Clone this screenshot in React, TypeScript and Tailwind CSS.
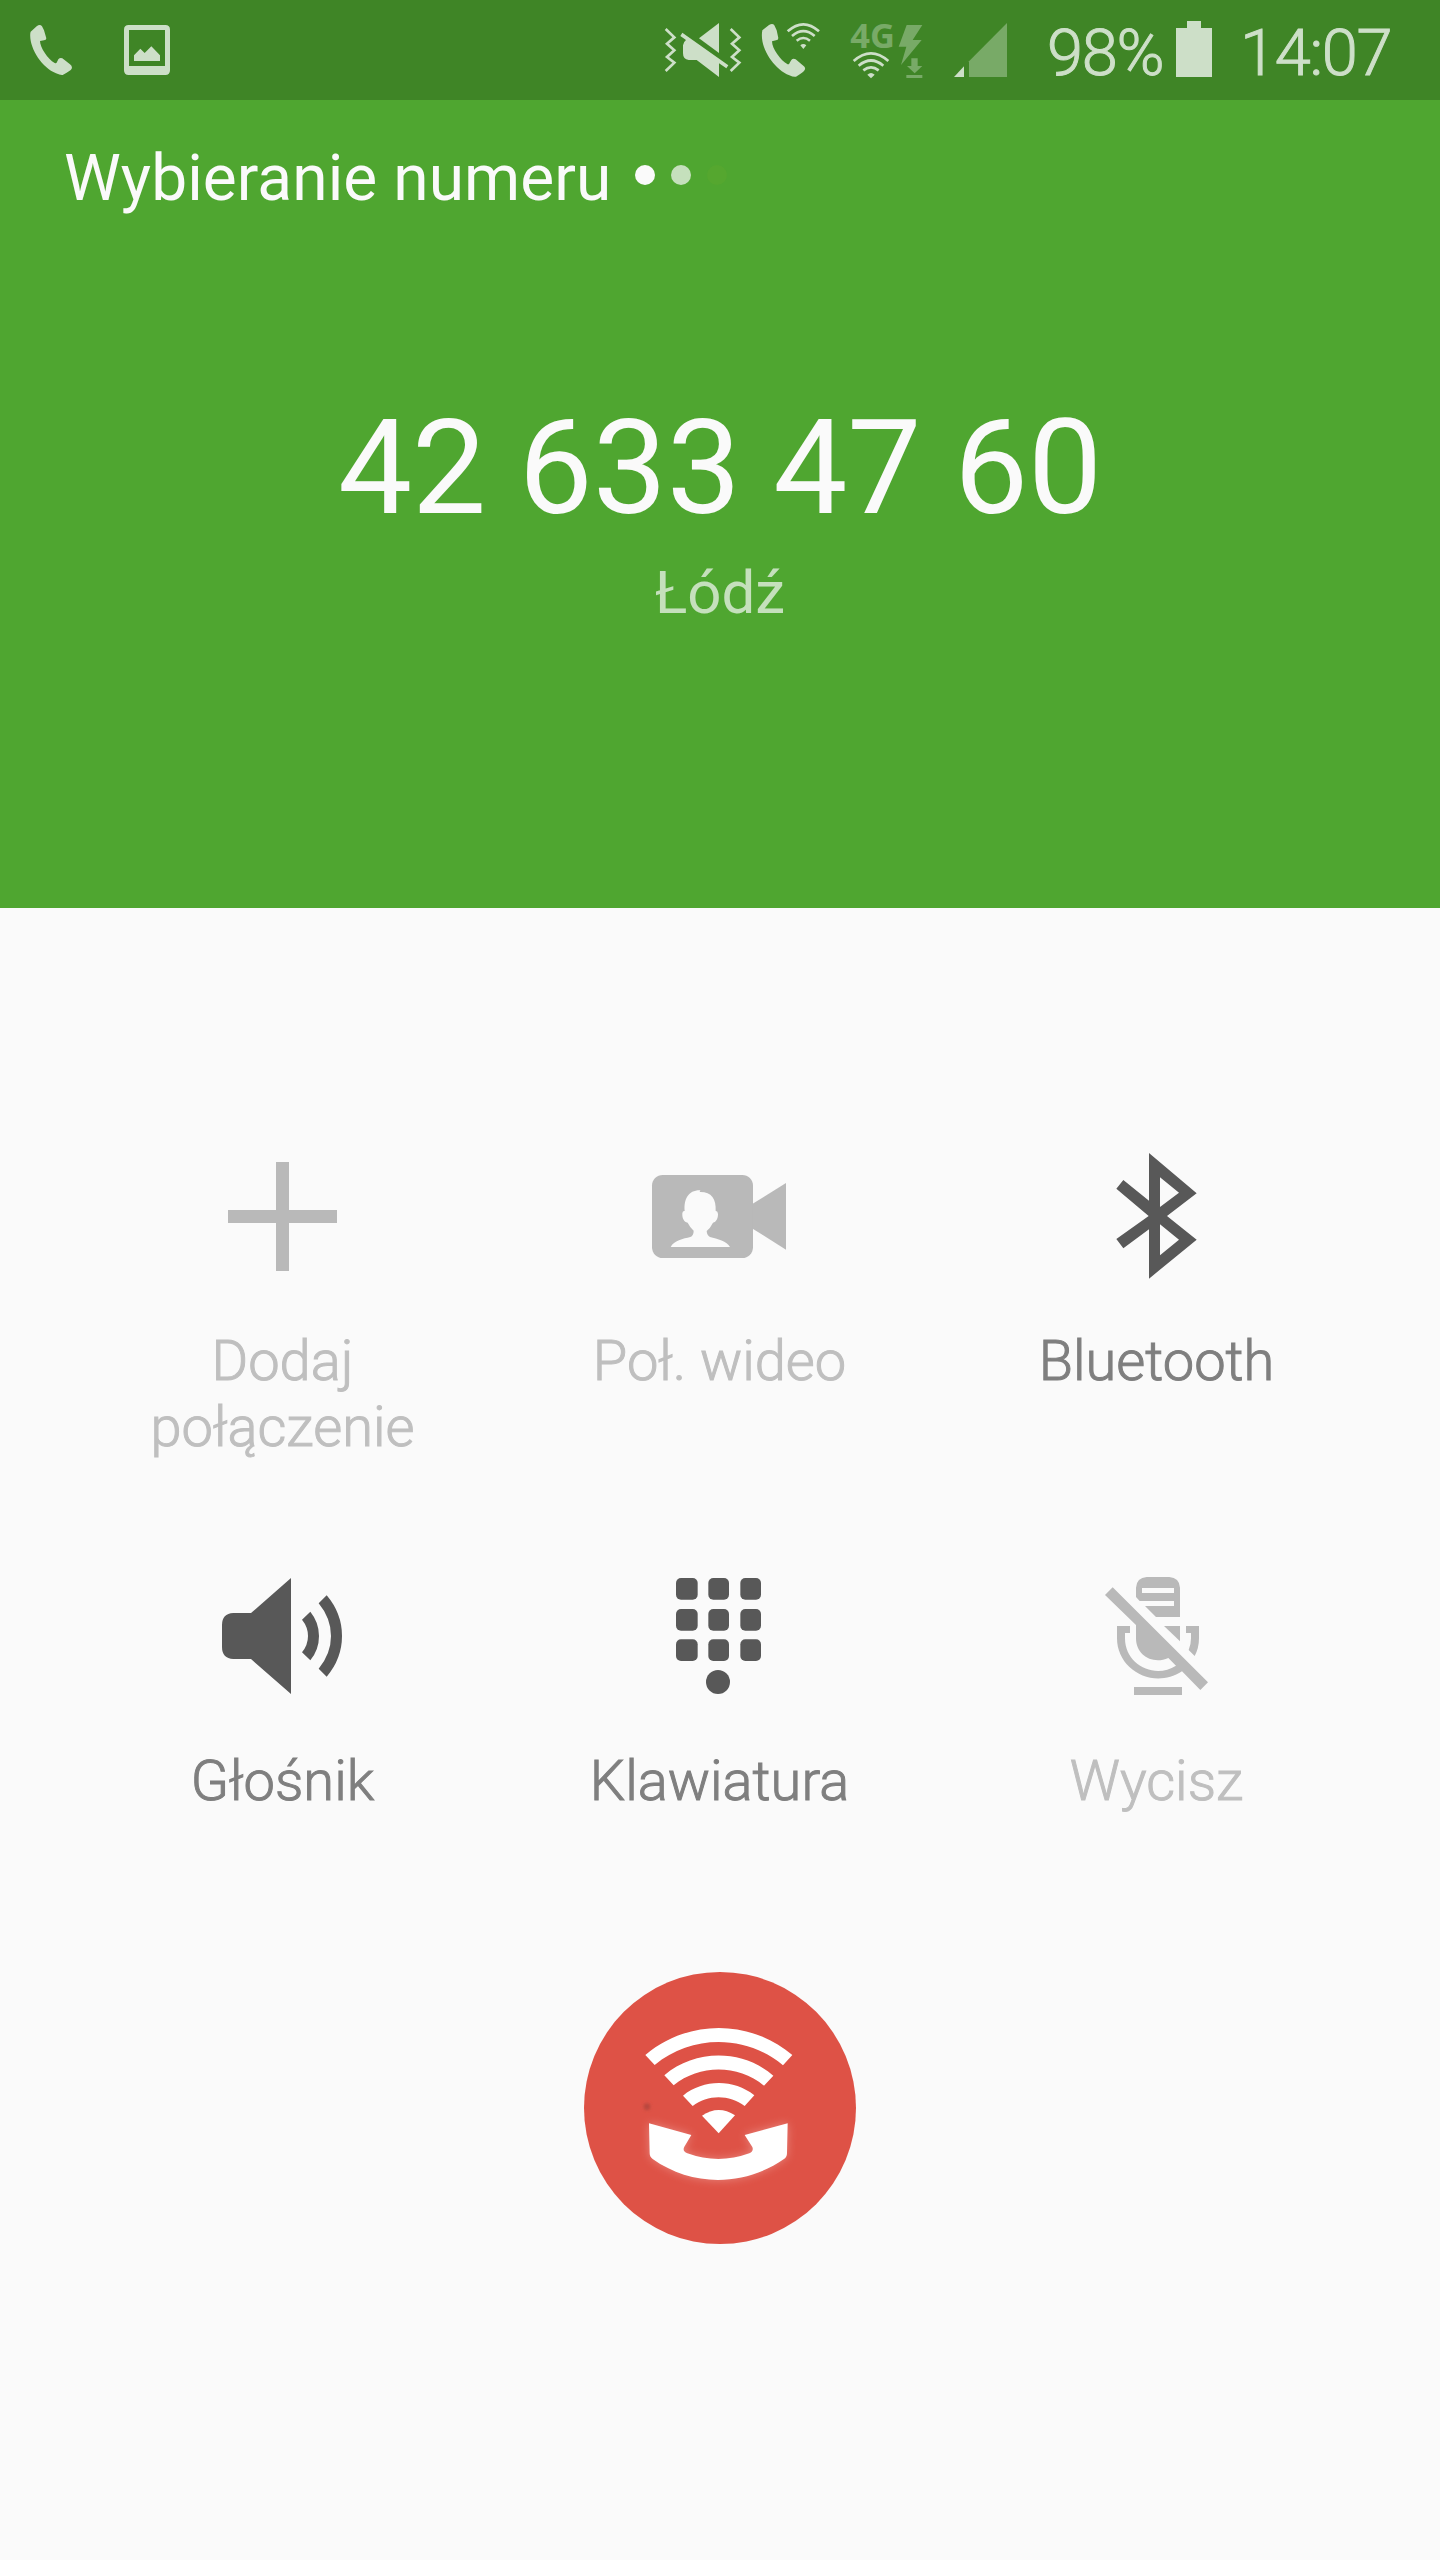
import type { ReactNode } from "react";

type Tone = "active" | "disabled";

/* Status bar glyphs are drawn on a grid of three units per pixel. */
function StatusIcon({ className, viewBox, children }: { className: string; viewBox: string; children: ReactNode }) {
  return (
    <svg className={`h-[100px] shrink-0 fill-current ${className}`} viewBox={viewBox}>
      {children}
    </svg>
  );
}

function StatusBar() {
  return (
    <div className="flex h-[100px] items-start bg-[#3f8526] text-[#cddfc8]">
      <StatusIcon className="ml-[30px] w-[43px]" viewBox="90 0 129 300">
        <path d="M92 95 L110 79 Q120 71 126 79 L132 91 L139 115 Q139 121 132 121 L120 123 C120 142 143 177 164 189 Q169 191 171 186 L175 178 Q180 172 187 175 L210 193 Q218 199 215 206 Q212 212 188 225 Q181 226 168 220 C125 203 86 142 91 99 Z" />
      </StatusIcon>
      <StatusIcon className="ml-[51px] w-[46px]" viewBox="372 0 138 300">
        <path
          fillRule="evenodd"
          d="M386 75 H496 Q510 75 510 89 V211 Q510 225 496 225 H386 Q372 225 372 211 V89 Q372 75 386 75 Z M387 90 V198 H495 V90 Z"
        />
        <path d="M402 183 V166 L421 146 L434 159 L454 139 L480 166 V183 Z" />
      </StatusIcon>

      <StatusIcon className="ml-[494px] w-[78px]" viewBox="42 0 234 300">
        <g fill="none" stroke="currentColor" strokeWidth="8">
          <path d="M47 87 L73 112 L51 131 L73 151 L51 171 L73 188 L47 213" />
          <path d="M242 87 L268 112 L246 131 L268 151 L246 171 L268 188 L242 213" />
        </g>
        <path d="M207 69 V159 L147 115 Z" />
        <path d="M97 98 L235 196 L229 205 L207 190 V231 L140 180 H116 Q99 178 99 160 V136 Q100 126 108 120 L91 108 Z" />
      </StatusIcon>
      <StatusIcon className="ml-[19px] w-[60px]" viewBox="333 0 180 300">
        <path d="M337 91 L357 75 Q368 68 373 76 L380 91 L385 114 Q385 121 378 121 L366 124 C366 146 392 182 413 193 Q418 194 420 187 L424 180 Q429 174 437 178 L460 197 Q468 203 464 210 Q461 216 438 230 Q431 232 418 226 C372 207 331 146 336 98 Z" />
        <g fill="none" stroke="currentColor" strokeWidth="8">
          <path d="M413 94 Q460 52 507 94" />
          <path d="M426 108 Q460 79 494 108" />
          <path d="M440 122 Q460 106 480 122" />
        </g>
        <path d="M451 136 Q460 128 469 136 L460 147 Z" />
      </StatusIcon>
      <StatusIcon className="ml-[29px] w-[74px]" viewBox="600 0 222 300">
        <g fill="#78aa67">
          <text x="601" y="143" fontSize="104" fontWeight="700" fontFamily="'Open Sans', 'Noto Sans', sans-serif" textLength="134" lengthAdjust="spacingAndGlyphs">
            4G
          </text>
          <path d="M770 75 H817 L788 120 H815 L753 195 L769 140 H746 Z" />
          <path d="M784 175 H803 V198 H817 L794 220 L771 198 H784 Z M769 225 H817 V234 H769 Z" />
        </g>
        <g fill="none" stroke="currentColor" strokeWidth="8">
          <path d="M611 183 Q663 137 715 183" />
          <path d="M626 197 Q663 166 700 197" />
          <path d="M640 211 Q663 193 686 211" />
        </g>
        <path d="M652 224 Q663 214 674 224 L663 235 Z" />
      </StatusIcon>
      <StatusIcon className="ml-[30px] w-[54px]" viewBox="912 0 162 300">
        <path d="M942 199 V231 H912 Z" />
        <path fill="#78aa67" d="M1071 69 V231 H957 V184 Z" />
      </StatusIcon>
      <span className="ml-[39px] w-[129px] whitespace-nowrap text-[65px] leading-[106px] font-light tracking-[-0.02em] [-webkit-text-stroke:1px_currentColor]">98%</span>
      <StatusIcon className="w-[36px]" viewBox="468 0 108 300">
        <path d="M501 63 H543 V84 H576 V231 H468 V84 H501 Z" />
      </StatusIcon>
      <span className="ml-[28px] whitespace-nowrap text-[65px] leading-[106px] font-light tracking-[-0.02em] [-webkit-text-stroke:1px_currentColor]">14:07</span>
    </div>
  );
}

function CallHeader() {
  return (
    <header className="h-[808px] bg-[#4fa630] pt-[41px] text-[#fafafa]">
      <div className="flex h-[75px] pl-16">
        <span className="w-[571px] whitespace-nowrap text-[64px] leading-[75px] tracking-[0.07px]">Wybieranie numeru</span>
        <div className="flex gap-4 pt-[24px]">
          <span className="size-5 rounded-full bg-[#fafafa]" />
          <span className="size-5 rounded-full bg-[#c5e0bc]" />
          <span className="size-5 rounded-full bg-[#55a72f]" />
        </div>
      </div>
      <h1 className="mt-[175px] text-center text-[132px] leading-[155px] tracking-[-0.15px]">42 633 47 60</h1>
      <p className="mt-[12px] text-center text-[60px] leading-[70px] text-[#c5e0bc]">Łódź</p>
    </header>
  );
}

function Action({ label, tone, viewBox, children }: { label: string; tone: Tone; viewBox: string; children: ReactNode }) {
  const active = tone === "active";
  return (
    <button className="flex h-[420px] flex-col items-center">
      <svg className={`h-[140px] w-[151px] ${active ? "fill-[#585858]" : "fill-[#b9b9b9]"}`} viewBox={viewBox}>
        {children}
      </svg>
      <span
        className={`mt-[38px] w-[320px] text-center text-[56px] leading-[66px] font-light [-webkit-text-stroke:1px_currentColor] ${active ? "text-[#7f7f7f]" : "text-[#bfbfbf]"}`}
      >
        {label}
      </span>
    </button>
  );
}

const KEY_COLUMNS = [318, 415, 511];
const KEY_ROWS = [84, 177, 268];

function Actions() {
  return (
    <div className="grid grid-cols-[437px_437px_437px] pl-16">
      <Action label="Dodaj połączenie" tone="disabled" viewBox="201 30 453 420">
        <path d="M408 66 H447 V210 H591 V249 H447 V393 H408 V249 H264 V210 H408 Z" />
      </Action>
      <Action label="Poł. wideo" tone="disabled" viewBox="222 30 453 420">
        <rect x="246" y="105" width="303" height="249" rx="32" />
        <path d="M548 191 L648 129 V329 L548 266 Z" />
        <path
          fill="#fafafa"
          d="M302 321 C311 302 340 296 361 291 Q371 287 371 272 Q361 264 353 248 C342 247 336 234 337 220 Q338 212 344 213 C341 178 355 150 391 151 L389 156 C424 155 439 176 437 213 Q443 212 444 222 C444 236 439 246 429 248 Q421 264 410 273 Q411 287 420 291 C442 297 471 303 480 321 Z"
        />
      </Action>
      <Action label="Bluetooth" tone="active" viewBox="183 60 453 420">
        <path
          fillRule="evenodd"
          d="M387 69 L530 190 L441 258 L530 329 L387 446 V298 L310 355 L289 327 L386 258 L289 176 L310 150 L387 212 Z M420 142 V231 L477 188 Z M420 283 V376 L477 329 Z"
        />
      </Action>
      <Action label="Głośnik" tone="active" viewBox="111 60 453 420">
        <path d="M363 84 V432 L243 327 H190 Q156 325 156 291 V225 Q156 191 190 189 H243 Z" />
        <path d="M421 185 Q447 217 447 258 Q447 299 421 331 L396 307 Q414 285 414 258 Q414 231 396 209 Z" />
        <path d="M470 136 Q516 190 516 258 Q516 326 470 380 L446 356 Q483 311 483 258 Q483 205 446 160 Z" />
      </Action>
      <Action label="Klawiatura" tone="active" viewBox="222 60 453 420">
        {KEY_ROWS.map((y) =>
          KEY_COLUMNS.map((x, i) => <rect key={`${x}-${y}`} x={x} y={y} width={i === 0 ? 65 : 62} height="65" rx="15" />),
        )}
        <circle cx="444" cy="396" r="36" />
      </Action>
      <Action label="Wycisz" tone="disabled" viewBox="93 60 453 420">
        <path d="M258 141 V113 Q260 83 290 81 H358 Q388 83 390 113 V201 H318 L285 168 H372 V153 H269 Z" />
        <path fill="#fafafa" d="M276 114 H372 V129 H276 Z" />
        <path d="M342 228 H390 V274 Z" />
        <path d="M408 228 H447 V265 Q447 294 434 318 L416 300 Q423 284 423 265 V249 H408 Z" />
        <path d="M188 112 L474 397 L451 420 L396 364 C310 420 201 360 201 265 V228 H240 V249 H225 V265 C225 346 315 388 378 347 L355 324 C308 345 258 316 258 265 V225 L165 135 Z" />
        <path d="M252 411 H396 V435 H252 Z" />
      </Action>
    </div>
  );
}

function HangUpButton() {
  return (
    <button className="size-[272px] rounded-full bg-[#de5246]">
      <svg className="size-[272px] fill-white" viewBox="42 36 816 816">
        <defs>
          <filter id="glow" x="-20%" y="-40%" width="140%" height="180%">
            <feGaussianBlur stdDeviation="14" />
          </filter>
          <filter id="speck" x="-100%" y="-100%" width="300%" height="300%">
            <feGaussianBlur stdDeviation="4" />
          </filter>
        </defs>
        <circle cx="231" cy="440" r="10" fill="#b8463d" filter="url(#speck)" />
        <path
          filter="url(#glow)"
          opacity="0.3"
          d="M237 490 L364 525 L343 560 Q336 574 352 580 Q445 614 538 580 Q552 574 547 561 L524 525 L653 490 L651 579 Q651 591 642 597 C520 681 365 680 248 597 Q239 591 239 580 Z"
        />
        <path d="M237 490 L364 525 L343 560 Q336 574 352 580 Q445 614 538 580 Q552 574 547 561 L524 525 L653 490 L651 579 Q651 591 642 597 C520 681 365 680 248 597 Q239 591 239 580 Z" />
        <path d="M226 285 C353 177 540 177 667 285 L639 316 C528 223 365 223 254 315 Z" />
        <path d="M283 346 C376 267 517 267 610 347 L582 377 C503 313 389 313 311 376 Z" />
        <path d="M339 407 C401 357 491 357 553 406 L524 438 C479 403 412 403 368 438 Z" />
        <path d="M396 467 Q445 434 495 466 L446 520 Z" />
      </svg>
    </button>
  );
}

export default function App() {
  return (
    <main className="flex h-[2560px] w-[1440px] flex-col overflow-hidden bg-[#fafafa] font-['Roboto',sans-serif]">
      <StatusBar />
      <CallHeader />
      <section className="flex flex-1 flex-col pt-[242px]">
        <Actions />
        <div className="-mt-[18px] flex justify-center">
          <HangUpButton />
        </div>
      </section>
    </main>
  );
}
